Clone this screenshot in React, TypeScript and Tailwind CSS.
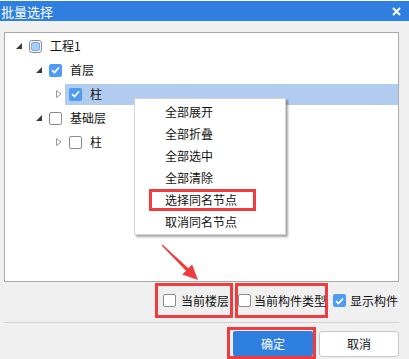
import React from "react";

type CheckState = "on" | "off" | "part";

const CheckBox = ({ state }: { state: CheckState }) => {
  if (state === "on") {
    return (
      <div className="w-[13px] h-[13px] shrink-0 rounded-[2px] bg-[#4f9cf5] flex items-center justify-center">
        <svg width="9" height="8" viewBox="0 0 9 8">
          <path d="M1 4.2 L3.5 6.5 L8 1.5" fill="none" stroke="#fff" strokeWidth="1.8" />
        </svg>
      </div>
    );
  }
  if (state === "part") {
    return (
      <div className="w-[13px] h-[13px] shrink-0 rounded-[3px] border border-[#8a8a8a] bg-white p-[1px]">
        <div className="w-full h-full rounded-[2px] bg-[#a6cdfb] border border-[#6fa9f0]" />
      </div>
    );
  }
  return <div className="w-[13px] h-[13px] shrink-0 rounded-[2px] border border-[#8c8c8c] bg-white" />;
};

const Toggle = ({ open }: { open: boolean }) =>
  open ? (
    <svg width="6" height="6" viewBox="0 0 6 6">
      <path d="M6 0 L6 6 L0 6 Z" fill="#3c3c3c" />
    </svg>
  ) : (
    <svg width="6" height="8" viewBox="0 0 6 8">
      <path d="M0.5 0.5 L5 4 L0.5 7.5 Z" fill="none" stroke="#999" strokeWidth="1" />
    </svg>
  );

const rows: { label: string; level: number; open: boolean; state: CheckState; selected?: boolean }[] = [
  { label: "工程1", level: 0, open: true, state: "part" },
  { label: "首层", level: 1, open: true, state: "on" },
  { label: "柱", level: 2, open: false, state: "on", selected: true },
  { label: "基础层", level: 1, open: true, state: "off" },
  { label: "柱", level: 2, open: false, state: "off" },
];

const menu = ["全部展开", "全部折叠", "全部选中", "全部清除", "选择同名节点", "取消同名节点"];

export default function App() {
  return (
    <div className="w-[409px] h-[359px] relative overflow-hidden bg-[#f0f0f0] text-[12px] text-[#111] font-['Noto_Sans_CJK_SC','Microsoft_YaHei',sans-serif]">
      <div className="h-px bg-white" />
      <div className="h-[20px] bg-[#2e7fdf] flex items-center justify-between pl-[1px] pr-[8px] text-white text-[13px] leading-none">
        <span>批量选择</span>
        <svg width="9" height="9" viewBox="0 0 9 9">
          <path d="M1 1 L8 8 M8 1 L1 8" stroke="#fff" strokeWidth="2" />
        </svg>
      </div>

      <div className="pl-[4px] pr-[10px] pt-[11px]">
        <div className="relative h-[250px] bg-white border border-[#a8a8a8] pt-[1px]">
          {rows.map((r, i) => (
            <div
              key={i}
              className={`h-[24px] flex items-center ${
                r.level === 0 ? "pl-[11px]" : r.level === 1 ? "pl-[31px]" : "pl-[51px]"
              }`}
            >
              <div className="w-[9px] flex items-center">
                <Toggle open={r.open} />
              </div>
              <div
                className={`flex-1 h-[21px] flex items-center gap-[8px] pl-[4px] ${
                  r.selected ? "bg-[#b1ccee]" : ""
                }`}
              >
                <CheckBox state={r.state} />
                <span>{r.label}</span>
              </div>
            </div>
          ))}

          <div className="absolute left-[129px] top-[65px] w-[152px] bg-white border border-[#d4d4d4] pt-[2px] pb-[1px] shadow-[2px_2px_2px_rgba(0,0,0,0.35)]">
            {menu.map((m, i) =>
              i === 4 ? (
                <div key={i} className="h-[22px] pl-[14px]">
                  <div className="w-[107px] h-[22px] border-[3px] border-[#f03c3c] pl-[13px] flex items-center">
                    {m}
                  </div>
                </div>
              ) : (
                <div key={i} className="h-[22px] pl-[30px] flex items-center">
                  {m}
                </div>
              )
            )}
          </div>
        </div>
      </div>

      <div className="mt-[1px] h-[35px] flex items-center justify-end pr-[11px]">
        <div className="w-[78px] h-[35px] border-[3px] border-[#f03c3c] flex items-center gap-[5px] pl-[5px]">
          <CheckBox state="off" />
          <span className="whitespace-nowrap">当前楼层</span>
        </div>
        <div className="ml-[2px] w-[93px] h-[35px] border-[3px] border-[#f03c3c] flex items-center gap-[3px] pl-[0px]">
          <CheckBox state="off" />
          <span className="whitespace-nowrap">当前构件类型</span>
        </div>
        <div className="ml-[5px] flex items-center gap-[4px]">
          <CheckBox state="on" />
          <span className="whitespace-nowrap">显示构件</span>
        </div>
      </div>

      <div className="mt-[4px] ml-[4px] mr-[10px] h-px bg-[#d2d2d2]" />

      <div className="mt-[4px] flex justify-end pr-[10px] gap-[3px]">
        <div className="border-[3px] border-[#f03c3c] pl-[3px] pt-[1px] h-[32px]">
          <button className="w-[80px] h-[25px] rounded-[2px] bg-[#2e7fdf] text-white text-[12px]">确定</button>
        </div>
        <button className="w-[80px] h-[26px] mt-[4px] rounded-[3px] bg-white border border-[#c8c8c8] text-[12px]">取消</button>
      </div>

      <svg className="absolute left-0 top-0 pointer-events-none" width="409" height="359">
        <polygon
          points="161.6,245.4 162.4,244.6 188.4,268.3 192.1,264.5 198,280 182.3,274.5 186,270.8"
          fill="#f03c3c"
        />
      </svg>
    </div>
  );
}
